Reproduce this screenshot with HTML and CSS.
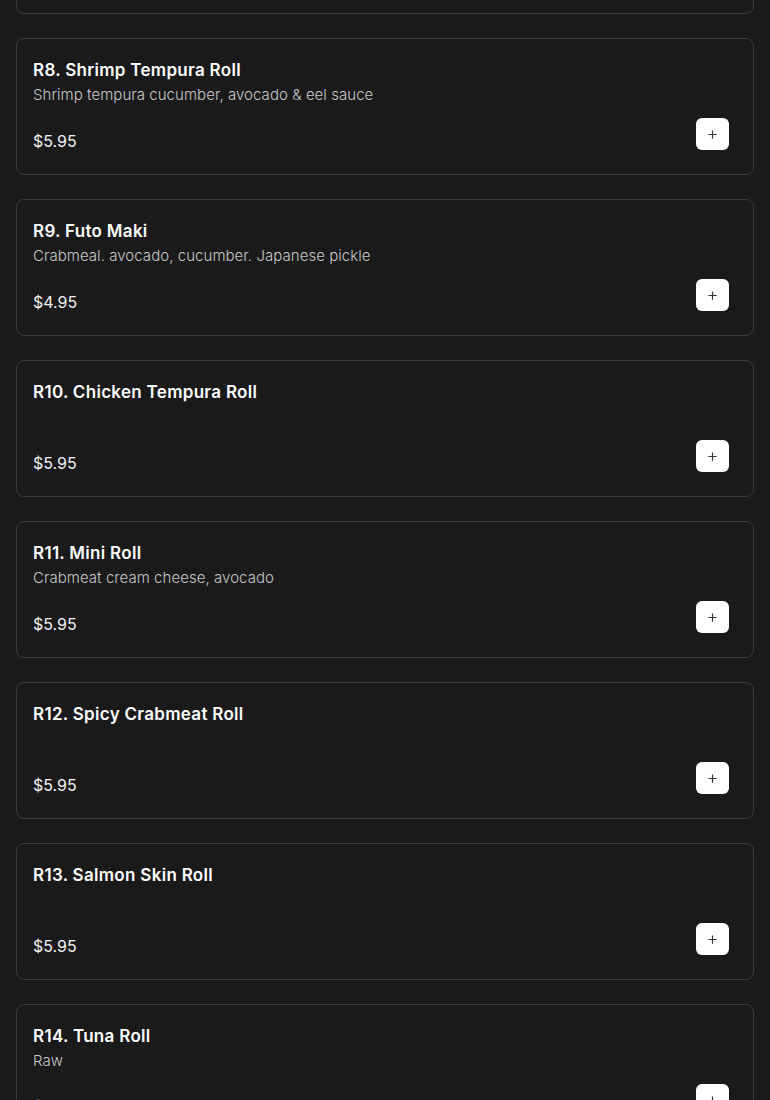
FILE: index.html
```html
<!DOCTYPE html>
<html lang="en">
<head>
    <meta charset="UTF-8">
    <meta name="viewport" content="width=device-width, initial-scale=1.0">
    <title>Sushi Rolls</title>
    <link rel="stylesheet" href="styles.css">
</head>
<body>
    <div class="menu-list">
        <div class="menu-card">
            <div class="item-info">
                <h3 class="item-name">R7. California Roll</h3>
                <p class="item-desc">Crabmeat, avocado, cucumber</p>
            </div>
            <div class="item-row">
                <span class="item-price">$4.95</span>
                <button class="add-btn" aria-label="Add"><svg viewBox="0 0 12 12"><path d="M6 1.5v9M1.5 6h9"/></svg></button>
            </div>
        </div>
        <div class="menu-card">
            <div class="item-info">
                <h3 class="item-name">R8. Shrimp Tempura Roll</h3>
                <p class="item-desc">Shrimp tempura cucumber, avocado &amp; eel sauce</p>
            </div>
            <div class="item-row">
                <span class="item-price">$5.95</span>
                <button class="add-btn" aria-label="Add"><svg viewBox="0 0 12 12"><path d="M6 1.5v9M1.5 6h9"/></svg></button>
            </div>
        </div>
        <div class="menu-card">
            <div class="item-info">
                <h3 class="item-name">R9. Futo Maki</h3>
                <p class="item-desc">Crabmeal. avocado, cucumber. Japanese pickle</p>
            </div>
            <div class="item-row">
                <span class="item-price">$4.95</span>
                <button class="add-btn" aria-label="Add"><svg viewBox="0 0 12 12"><path d="M6 1.5v9M1.5 6h9"/></svg></button>
            </div>
        </div>
        <div class="menu-card">
            <div class="item-info">
                <h3 class="item-name">R10. Chicken Tempura Roll</h3>
                <p class="item-desc"></p>
            </div>
            <div class="item-row">
                <span class="item-price">$5.95</span>
                <button class="add-btn" aria-label="Add"><svg viewBox="0 0 12 12"><path d="M6 1.5v9M1.5 6h9"/></svg></button>
            </div>
        </div>
        <div class="menu-card">
            <div class="item-info">
                <h3 class="item-name">R11. Mini Roll</h3>
                <p class="item-desc">Crabmeat cream cheese, avocado</p>
            </div>
            <div class="item-row">
                <span class="item-price">$5.95</span>
                <button class="add-btn" aria-label="Add"><svg viewBox="0 0 12 12"><path d="M6 1.5v9M1.5 6h9"/></svg></button>
            </div>
        </div>
        <div class="menu-card">
            <div class="item-info">
                <h3 class="item-name">R12. Spicy Crabmeat Roll</h3>
                <p class="item-desc"></p>
            </div>
            <div class="item-row">
                <span class="item-price">$5.95</span>
                <button class="add-btn" aria-label="Add"><svg viewBox="0 0 12 12"><path d="M6 1.5v9M1.5 6h9"/></svg></button>
            </div>
        </div>
        <div class="menu-card">
            <div class="item-info">
                <h3 class="item-name">R13. Salmon Skin Roll</h3>
                <p class="item-desc"></p>
            </div>
            <div class="item-row">
                <span class="item-price">$5.95</span>
                <button class="add-btn" aria-label="Add"><svg viewBox="0 0 12 12"><path d="M6 1.5v9M1.5 6h9"/></svg></button>
            </div>
        </div>
        <div class="menu-card">
            <div class="item-info">
                <h3 class="item-name">R14. Tuna Roll</h3>
                <p class="item-desc">Raw</p>
            </div>
            <div class="item-row">
                <span class="item-price">$5.95</span>
                <button class="add-btn" aria-label="Add"><svg viewBox="0 0 12 12"><path d="M6 1.5v9M1.5 6h9"/></svg></button>
            </div>
        </div>
    </div>
</body>
</html>
```

FILE: styles.css
```css
body{
    margin: 0;
    background-color: #1a1a1a;
    color: #ffffff;
    font-family: Inter, "Open Sans", sans-serif;
}
.menu-list{
    display: flex;
    flex-direction: column;
    gap: 24px;
    padding: 0 16px;
    margin-top: -123px;
}
.menu-card{
    height: 137px;
    box-sizing: border-box;
    border: 1px solid #3a3a3a;
    border-radius: 8px;
    padding: 19px 24px 24px 16px;
    display: flex;
    flex-direction: column;
    justify-content: space-between;
}
.item-name{
    margin: 0;
    font-size: 17px;
    font-weight: 600;
    line-height: 24px;
    letter-spacing: 0.3px;
}
.item-desc{
    margin: 2px 0 0;
    min-height: 22px;
    font-size: 15px;
    font-weight: 300;
    line-height: 22px;
    color: #c8c8c8;
    letter-spacing: 0.05px;
}
.item-row{
    display: flex;
    justify-content: space-between;
    align-items: flex-end;
}
.item-price{
    font-size: 16px;
    line-height: 18px;
    color: #f2f2f2;
}
.add-btn{
    width: 33px;
    height: 32px;
    border: none;
    border-radius: 6px;
    background-color: #ffffff;
    display: flex;
    align-items: center;
    justify-content: center;
    padding: 0;
    cursor: pointer;
}
.add-btn svg{
    width: 11px;
    height: 11px;
    stroke: #333333;
    stroke-width: 1.3;
    fill: none;
}
```
